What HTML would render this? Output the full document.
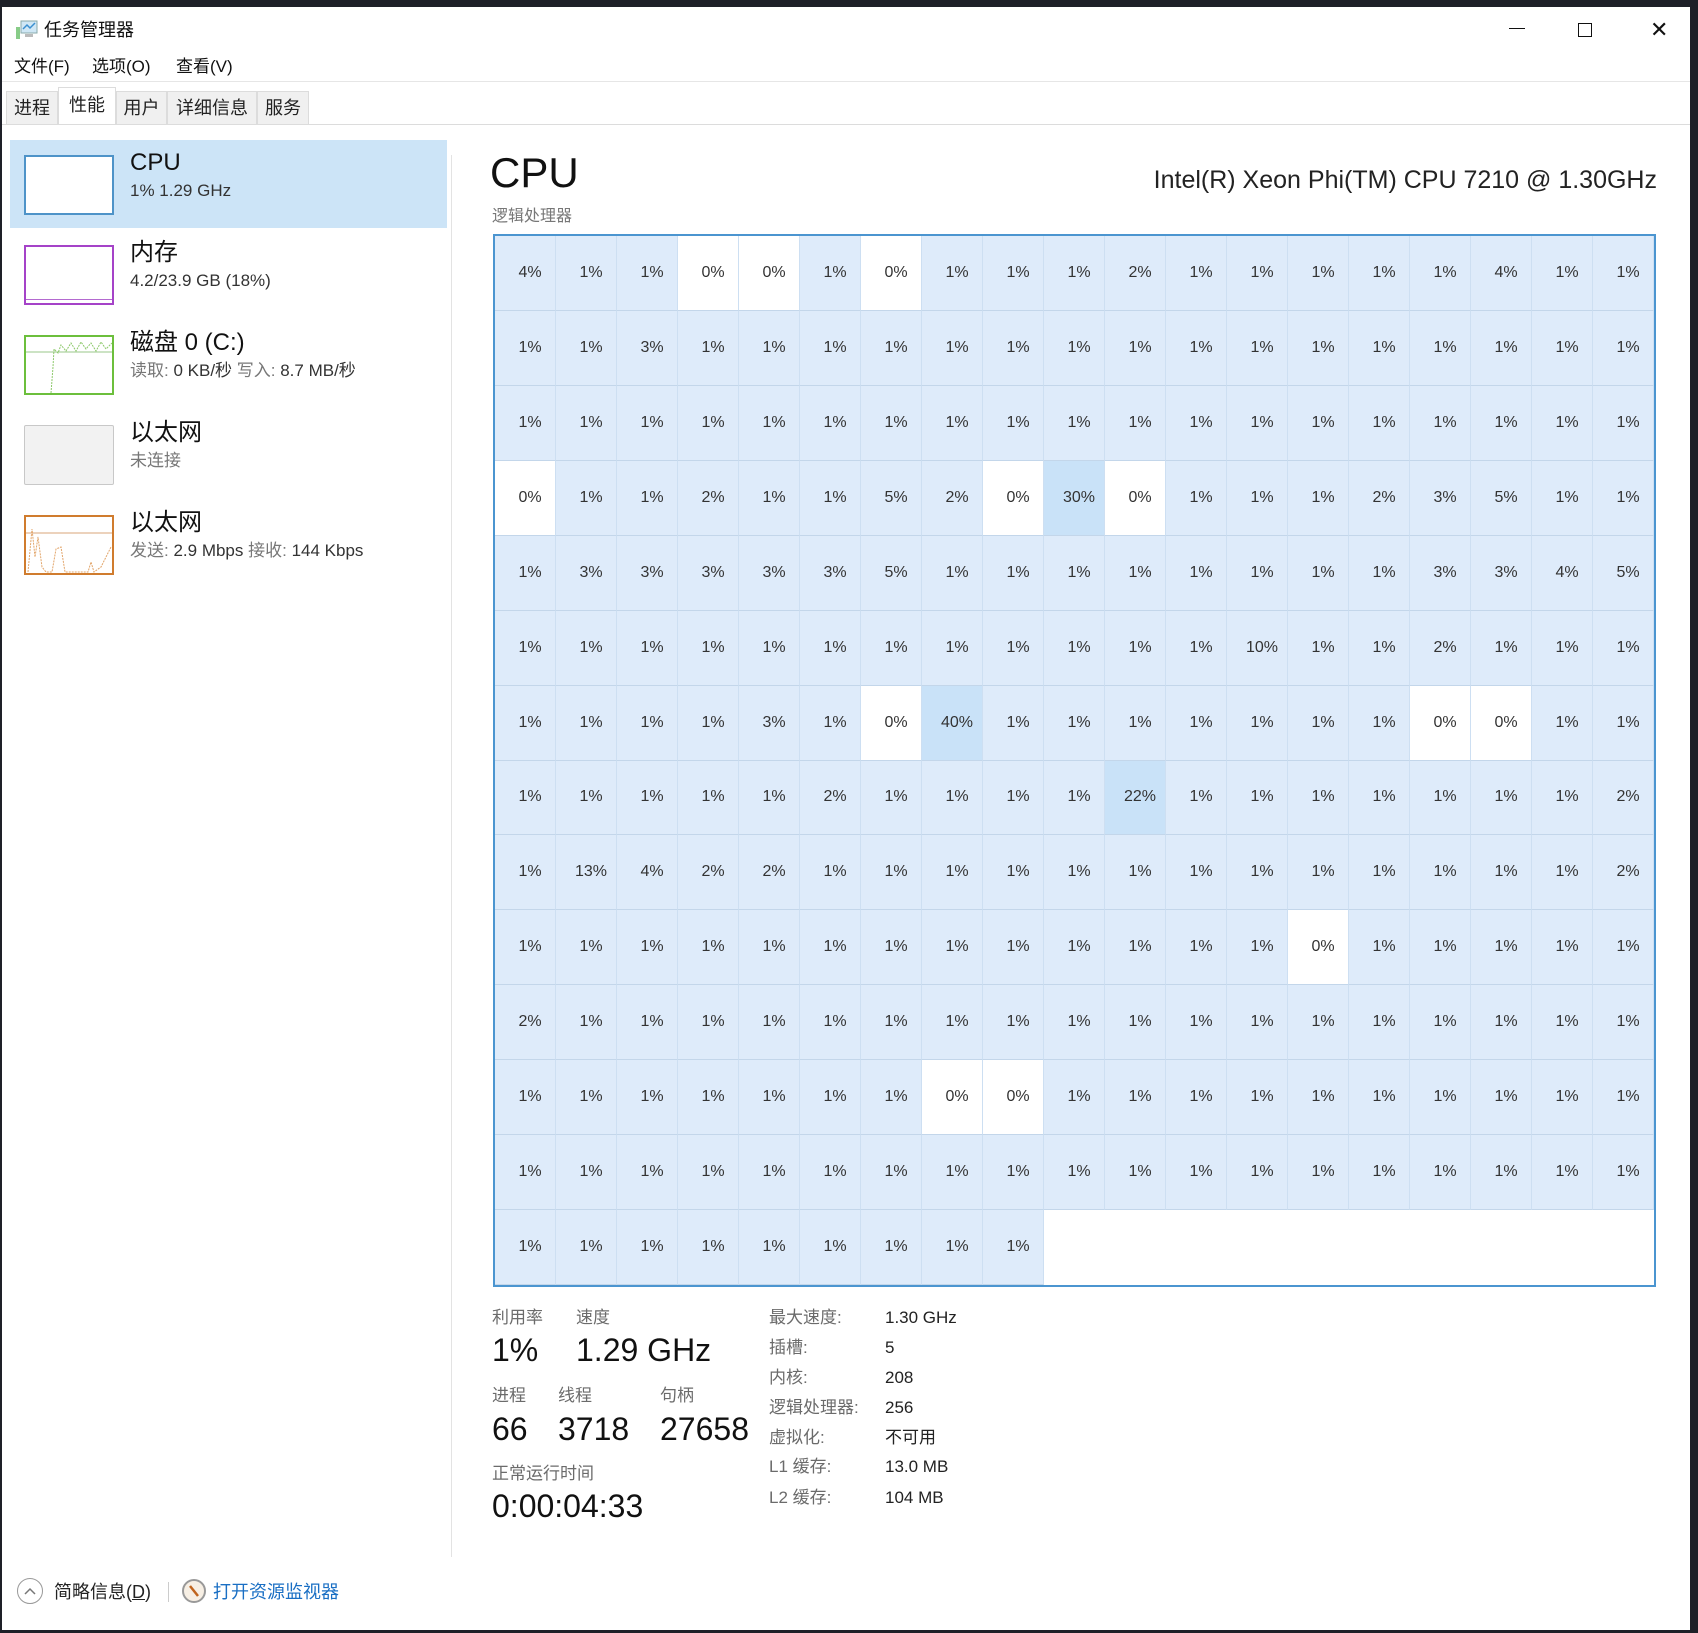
<!DOCTYPE html>
<html><head><meta charset="utf-8"><style>
*{margin:0;padding:0;box-sizing:border-box}
body{width:1698px;height:1633px;background:#1e2028;position:relative;overflow:hidden;font-family:"Liberation Sans","Noto Sans CJK SC",sans-serif;color:#000;line-height:1}
.win{position:absolute;left:2px;top:7px;width:1688px;height:1623px;background:#fff}
.abs{position:absolute;white-space:nowrap}
.tab{position:absolute;top:84px;height:34px;background:#f0f0f0;border:1px solid #dcdcdc;border-bottom:none;font-size:18px;line-height:32px;text-align:center;color:#222}
.thumb{position:absolute;left:22px;width:90px;height:60px;border:2px solid}
.t1{position:absolute;left:128px;font-size:24px;color:#111;white-space:nowrap}
.t2{position:absolute;left:128px;font-size:17px;color:#333;white-space:nowrap}
.grid{position:absolute;left:491px;top:227px;width:1163px;height:1053px;border:2px solid #4b95d0;display:grid;grid-template-columns:repeat(19,1fr);grid-template-rows:repeat(14,1fr);background:#fff}
.grid div{background:#deebfa;border-right:1px solid #cddff2;border-bottom:1px solid #c3d6ea;font-size:16px;color:#333;display:flex;align-items:center;justify-content:center;padding-left:10px}
.grid div.z{background:#fff}
.grid div.h{background:#c9e2f8}
.lab{position:absolute;font-size:17px;color:#6b6b6b;white-space:nowrap}
.big{position:absolute;font-size:32px;color:#111;white-space:nowrap}
.rl{position:absolute;left:767px;font-size:17px;color:#6b6b6b;white-space:nowrap}
.rv{position:absolute;left:883px;font-size:17px;color:#222;white-space:nowrap}
</style></head><body>
<div class="win">
<svg class="abs" style="left:13px;top:12px" width="24" height="22" viewBox="0 0 24 22"><rect x="6" y="2" width="16" height="12" fill="#cfe7f5" stroke="#8aa" /><path d="M8 10 L12 6 L15 9 L20 4" stroke="#3a8fd0" fill="none" stroke-width="1.5"/><rect x="1" y="8" width="4" height="12" fill="#8c8"/><rect x="10" y="15" width="8" height="3" fill="#bbb"/></svg>
<div class="abs" style="left:42px;top:14px;font-size:18px;color:#111">任务管理器</div>
<div class="abs" style="left:1507px;top:21px;width:16px;height:1px;background:#111"></div>
<div class="abs" style="left:1576px;top:16px;width:14px;height:14px;border:1px solid #111"></div>
<div class="abs" style="left:1648px;top:12px;font-size:22px;color:#111">✕</div>
<div class="abs" style="left:12px;top:51px;font-size:17px;color:#111">文件(F)</div>
<div class="abs" style="left:90px;top:51px;font-size:17px;color:#111">选项(O)</div>
<div class="abs" style="left:174px;top:51px;font-size:17px;color:#111">查看(V)</div>
<div class="abs" style="left:0;top:74px;width:1688px;height:1px;background:#e6e6e6"></div>
<div class="tab" style="left:4px;width:52px">进程</div>
<div class="tab" style="left:56px;width:58px;top:80px;height:38px;background:#fff;line-height:34px">性能</div>
<div class="tab" style="left:114px;width:51px">用户</div>
<div class="tab" style="left:165px;width:90px">详细信息</div>
<div class="tab" style="left:255px;width:52px">服务</div>
<div class="abs" style="left:0;top:117px;width:1688px;height:1px;background:#dcdcdc"></div>

<div class="abs" style="left:8px;top:133px;width:437px;height:88px;background:#cce4f7"></div>
<div class="thumb" style="top:148px;border-color:#4e93c8;background:#fff"></div>
<div class="t1" style="top:144px">CPU</div><div class="t2" style="top:175px">1% 1.29 GHz</div>
<div class="thumb" style="top:238px;border-color:#a543c8;background:#fff"><div style="position:absolute;left:0;right:0;bottom:3px;height:1px;background:#b46ad0"></div></div>
<div class="t1" style="top:234px">内存</div><div class="t2" style="top:265px">4.2/23.9 GB (18%)</div>
<div class="thumb" style="top:328px;border-color:#6cbf3c;background:#fff"><svg width="86" height="56" style="position:absolute;left:0;top:0"><line x1="0" y1="15" x2="86" y2="15" stroke="#9ac78a"/><path d="M25 56 L27 30 L28 12 L32 16 L35 8 L40 14 L45 6 L50 14 L55 5 L60 12 L65 6 L70 14 L75 5 L80 12 L86 6" stroke="#8cc86a" fill="none" stroke-dasharray="2 1"/></svg></div>
<div class="t1" style="top:324px">磁盘 0 (C:)</div><div class="t2" style="top:355px"><span style="color:#777">读取:</span> 0 KB/秒 <span style="color:#777">写入:</span> 8.7 MB/秒</div>
<div class="thumb" style="top:418px;border-color:#c8c8c8;background:#f2f2f2;border-width:1px;border-radius:2px"></div>
<div class="t1" style="top:414px">以太网</div><div class="t2" style="top:445px;color:#777">未连接</div>
<div class="thumb" style="top:508px;border-color:#d07c2e;background:#fff"><svg width="86" height="56" style="position:absolute;left:0;top:0"><line x1="0" y1="16" x2="86" y2="16" stroke="#d9a57a"/><path d="M2 55 L6 12 L9 40 L12 20 L16 50 L20 55 L26 55 L30 32 L35 30 L39 55 L62 55 L65 45 L68 55 L75 50 L80 40 L85 30" stroke="#e2a56a" fill="none" stroke-dasharray="2 1"/></svg></div>
<div class="t1" style="top:504px">以太网</div><div class="t2" style="top:535px"><span style="color:#777">发送:</span> 2.9 Mbps <span style="color:#777">接收:</span> 144 Kbps</div>
<div class="abs" style="left:449px;top:148px;width:1px;height:1402px;background:#e3e3e3"></div>

<div class="abs" style="left:488px;top:145px;font-size:42px;color:#111">CPU</div>
<div class="abs" style="left:490px;top:202px;font-size:16px;color:#777">逻辑处理器</div>
<div class="abs" style="right:33px;top:161px;font-size:25px;color:#222">Intel(R) Xeon Phi(TM) CPU 7210 @ 1.30GHz</div>

<div class="grid">
<div>4%</div><div>1%</div><div>1%</div><div class="z">0%</div><div class="z">0%</div><div>1%</div><div class="z">0%</div><div>1%</div><div>1%</div><div>1%</div><div>2%</div><div>1%</div><div>1%</div><div>1%</div><div>1%</div><div>1%</div><div>4%</div><div>1%</div><div>1%</div>
<div>1%</div><div>1%</div><div>3%</div><div>1%</div><div>1%</div><div>1%</div><div>1%</div><div>1%</div><div>1%</div><div>1%</div><div>1%</div><div>1%</div><div>1%</div><div>1%</div><div>1%</div><div>1%</div><div>1%</div><div>1%</div><div>1%</div>
<div>1%</div><div>1%</div><div>1%</div><div>1%</div><div>1%</div><div>1%</div><div>1%</div><div>1%</div><div>1%</div><div>1%</div><div>1%</div><div>1%</div><div>1%</div><div>1%</div><div>1%</div><div>1%</div><div>1%</div><div>1%</div><div>1%</div>
<div class="z">0%</div><div>1%</div><div>1%</div><div>2%</div><div>1%</div><div>1%</div><div>5%</div><div>2%</div><div class="z">0%</div><div class="h">30%</div><div class="z">0%</div><div>1%</div><div>1%</div><div>1%</div><div>2%</div><div>3%</div><div>5%</div><div>1%</div><div>1%</div>
<div>1%</div><div>3%</div><div>3%</div><div>3%</div><div>3%</div><div>3%</div><div>5%</div><div>1%</div><div>1%</div><div>1%</div><div>1%</div><div>1%</div><div>1%</div><div>1%</div><div>1%</div><div>3%</div><div>3%</div><div>4%</div><div>5%</div>
<div>1%</div><div>1%</div><div>1%</div><div>1%</div><div>1%</div><div>1%</div><div>1%</div><div>1%</div><div>1%</div><div>1%</div><div>1%</div><div>1%</div><div>10%</div><div>1%</div><div>1%</div><div>2%</div><div>1%</div><div>1%</div><div>1%</div>
<div>1%</div><div>1%</div><div>1%</div><div>1%</div><div>3%</div><div>1%</div><div class="z">0%</div><div class="h">40%</div><div>1%</div><div>1%</div><div>1%</div><div>1%</div><div>1%</div><div>1%</div><div>1%</div><div class="z">0%</div><div class="z">0%</div><div>1%</div><div>1%</div>
<div>1%</div><div>1%</div><div>1%</div><div>1%</div><div>1%</div><div>2%</div><div>1%</div><div>1%</div><div>1%</div><div>1%</div><div class="h">22%</div><div>1%</div><div>1%</div><div>1%</div><div>1%</div><div>1%</div><div>1%</div><div>1%</div><div>2%</div>
<div>1%</div><div>13%</div><div>4%</div><div>2%</div><div>2%</div><div>1%</div><div>1%</div><div>1%</div><div>1%</div><div>1%</div><div>1%</div><div>1%</div><div>1%</div><div>1%</div><div>1%</div><div>1%</div><div>1%</div><div>1%</div><div>2%</div>
<div>1%</div><div>1%</div><div>1%</div><div>1%</div><div>1%</div><div>1%</div><div>1%</div><div>1%</div><div>1%</div><div>1%</div><div>1%</div><div>1%</div><div>1%</div><div class="z">0%</div><div>1%</div><div>1%</div><div>1%</div><div>1%</div><div>1%</div>
<div>2%</div><div>1%</div><div>1%</div><div>1%</div><div>1%</div><div>1%</div><div>1%</div><div>1%</div><div>1%</div><div>1%</div><div>1%</div><div>1%</div><div>1%</div><div>1%</div><div>1%</div><div>1%</div><div>1%</div><div>1%</div><div>1%</div>
<div>1%</div><div>1%</div><div>1%</div><div>1%</div><div>1%</div><div>1%</div><div>1%</div><div class="z">0%</div><div class="z">0%</div><div>1%</div><div>1%</div><div>1%</div><div>1%</div><div>1%</div><div>1%</div><div>1%</div><div>1%</div><div>1%</div><div>1%</div>
<div>1%</div><div>1%</div><div>1%</div><div>1%</div><div>1%</div><div>1%</div><div>1%</div><div>1%</div><div>1%</div><div>1%</div><div>1%</div><div>1%</div><div>1%</div><div>1%</div><div>1%</div><div>1%</div><div>1%</div><div>1%</div><div>1%</div>
<div>1%</div><div>1%</div><div>1%</div><div>1%</div><div>1%</div><div>1%</div><div>1%</div><div>1%</div><div>1%</div><div class="z" style="grid-column:span 10;border-right:none;border-bottom:none"></div>
</div>

<div class="lab" style="left:490px;top:1302px">利用率</div>
<div class="lab" style="left:574px;top:1302px">速度</div>
<div class="big" style="left:490px;top:1327px">1%</div>
<div class="big" style="left:574px;top:1327px">1.29 GHz</div>
<div class="lab" style="left:490px;top:1380px">进程</div>
<div class="lab" style="left:556px;top:1380px">线程</div>
<div class="lab" style="left:658px;top:1380px">句柄</div>
<div class="big" style="left:490px;top:1406px">66</div>
<div class="big" style="left:556px;top:1406px">3718</div>
<div class="big" style="left:658px;top:1406px">27658</div>
<div class="lab" style="left:490px;top:1458px">正常运行时间</div>
<div class="big" style="left:490px;top:1483px">0:00:04:33</div>

<div class="rl" style="top:1302px">最大速度:</div><div class="rv" style="top:1302px">1.30 GHz</div>
<div class="rl" style="top:1332px">插槽:</div><div class="rv" style="top:1332px">5</div>
<div class="rl" style="top:1362px">内核:</div><div class="rv" style="top:1362px">208</div>
<div class="rl" style="top:1392px">逻辑处理器:</div><div class="rv" style="top:1392px">256</div>
<div class="rl" style="top:1422px">虚拟化:</div><div class="rv" style="top:1422px">不可用</div>
<div class="rl" style="top:1451px">L1 缓存:</div><div class="rv" style="top:1451px">13.0 MB</div>
<div class="rl" style="top:1482px">L2 缓存:</div><div class="rv" style="top:1482px">104 MB</div>

<div class="abs" style="left:15px;top:1571px;width:26px;height:26px;border:1.5px solid #999;border-radius:50%"></div>
<svg class="abs" style="left:21px;top:1579px" width="14" height="10"><path d="M2 8 L7 3 L12 8" stroke="#777" fill="none" stroke-width="1.5"/></svg>
<div class="abs" style="left:52px;top:1576px;font-size:18px;color:#222">简略信息(<u>D</u>)</div>
<div class="abs" style="left:166px;top:1575px;width:1px;height:20px;background:#ccc"></div>
<div class="abs" style="left:180px;top:1572px;width:24px;height:24px;border:2px solid #999;border-radius:50%;background:#f7efe4"></div>
<svg class="abs" style="left:184px;top:1576px" width="16" height="16"><path d="M4 3 L12 13" stroke="#c0641e" stroke-width="2.5"/></svg>
<div class="abs" style="left:211px;top:1576px;font-size:18px;color:#1a6fc4">打开资源监视器</div>
</div>
</body></html>
